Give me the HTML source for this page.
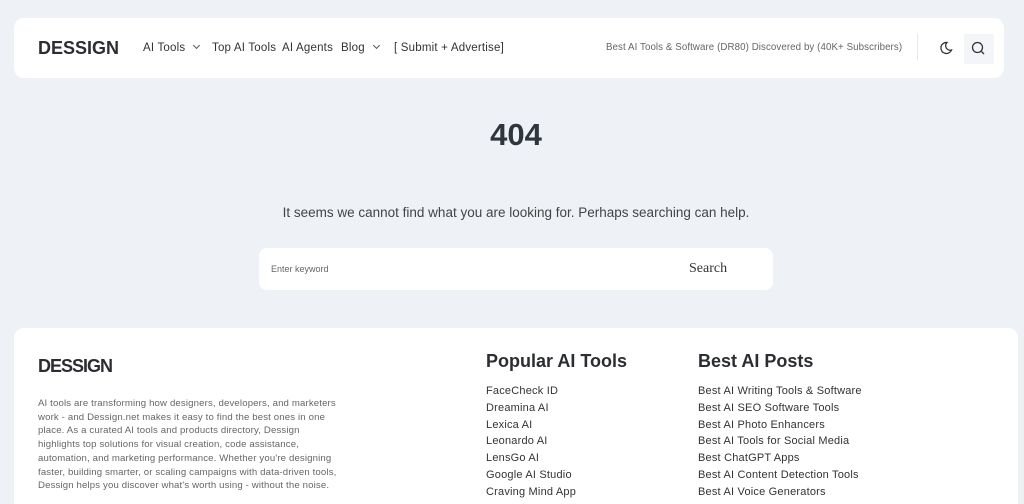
<!DOCTYPE html>
<html><head><meta charset="utf-8"><style>
*{margin:0;padding:0;box-sizing:border-box}
html,body{width:1024px;height:504px;overflow:hidden}
body{background:#eef1f6;font-family:"Liberation Sans",sans-serif;color:#2b2f36;position:relative}
.abs{position:absolute;white-space:nowrap}
.hdr{position:absolute;left:14px;top:18px;width:990px;height:60px;background:#fff;border-radius:10px}
.nav{font-size:11.5px;color:#333;top:42px;letter-spacing:0.2px}
.chev{display:inline-block;width:5px;height:5px;border-right:1.2px solid #555;border-bottom:1.2px solid #555;transform:rotate(45deg);margin-left:9px;position:relative;top:-3px}
.foot{position:absolute;left:14px;top:328px;width:1004px;height:176px;background:#fff;border-radius:10px 10px 0 0}
.list{font-size:11px;color:#333;line-height:16.8px;letter-spacing:0.2px}
</style></head><body>
<div class="hdr"></div>
<div class="abs" style="left:38px;top:38px;font-size:18px;font-weight:bold;color:#2b2d33">DESSIGN</div>
<div class="abs nav" style="left:143px">AI Tools<span class="chev"></span></div>
<div class="abs nav" style="left:212px">Top AI Tools</div>
<div class="abs nav" style="left:282px">AI Agents</div>
<div class="abs nav" style="left:341px">Blog<span class="chev"></span></div>
<div class="abs nav" style="left:394px">[ Submit + Advertise]</div>
<div class="abs" style="left:606px;top:42px;font-size:9.7px;color:#666;letter-spacing:0.1px">Best AI Tools &amp; Software (DR80) Discovered by (40K+ Subscribers)</div>
<div class="abs" style="left:917px;top:34px;width:1px;height:26px;background:#e6e8ec"></div>
<svg class="abs" style="left:939px;top:41px" width="14" height="14" viewBox="0 0 14 14"><path d="M8 1.5A5.5 5.5 0 1 0 12.5 9 4.5 4.5 0 0 1 8 1.5Z" fill="none" stroke="#333" stroke-width="1.3"/></svg>
<div class="abs" style="left:964px;top:34px;width:30px;height:30px;background:#f3f5f8"></div>
<svg class="abs" style="left:971px;top:41px" width="15" height="15" viewBox="0 0 15 15"><circle cx="6.5" cy="6.5" r="5" fill="none" stroke="#333" stroke-width="1.3"/><path d="M10.5 10.5L13 13" stroke="#333" stroke-width="1.3"/></svg>

<div class="abs" style="left:0;width:1032px;text-align:center;top:117px;font-size:31px;font-weight:bold;color:#30343b">404</div>
<div class="abs" style="left:0;width:1032px;text-align:center;top:205px;font-size:13.5px;color:#444">It seems we cannot find what you are looking for. Perhaps searching can help.</div>
<div class="abs" style="left:259px;top:248px;width:514px;height:42px;background:#fff;border-radius:8px"></div>
<div class="abs" style="left:271px;top:264px;font-size:9px;color:#666">Enter keyword</div>
<div class="abs" style="left:689px;top:261px;font-size:14px;font-family:'Liberation Serif',serif;color:#333">Search</div>

<div class="foot"></div>
<div class="abs" style="left:38px;top:356px;font-size:18px;font-weight:bold;letter-spacing:-1px;color:#2b2d33">DESSIGN</div>
<div class="abs" style="left:38px;top:397px;font-size:9.6px;color:#666;line-height:13.7px;white-space:normal;width:302px;letter-spacing:0.15px">AI tools are transforming how designers, developers, and marketers work - and Dessign.net makes it easy to find the best ones in one place. As a curated AI tools and products directory, Dessign highlights top solutions for visual creation, code assistance, automation, and marketing performance. Whether you're designing faster, building smarter, or scaling campaigns with data-driven tools, Dessign helps you discover what's worth using - without the noise.</div>
<div class="abs" style="left:486px;top:351px;font-size:18px;font-weight:bold;color:#2b2d33">Popular AI Tools</div>
<div class="abs" style="left:698px;top:351px;font-size:18px;font-weight:bold;color:#2b2d33">Best AI Posts</div>
<div class="abs list" style="left:486px;top:383px">FaceCheck ID<br>Dreamina AI<br>Lexica AI<br>Leonardo AI<br>LensGo AI<br>Google AI Studio<br>Craving Mind App<br>Nano Banana Pro</div>
<div class="abs list" style="left:698px;top:383px">Best AI Writing Tools &amp; Software<br>Best AI SEO Software Tools<br>Best AI Photo Enhancers<br>Best AI Tools for Social Media<br>Best ChatGPT Apps<br>Best AI Content Detection Tools<br>Best AI Voice Generators<br>Best AI Video Enhancement Tools</div>
</body></html>
